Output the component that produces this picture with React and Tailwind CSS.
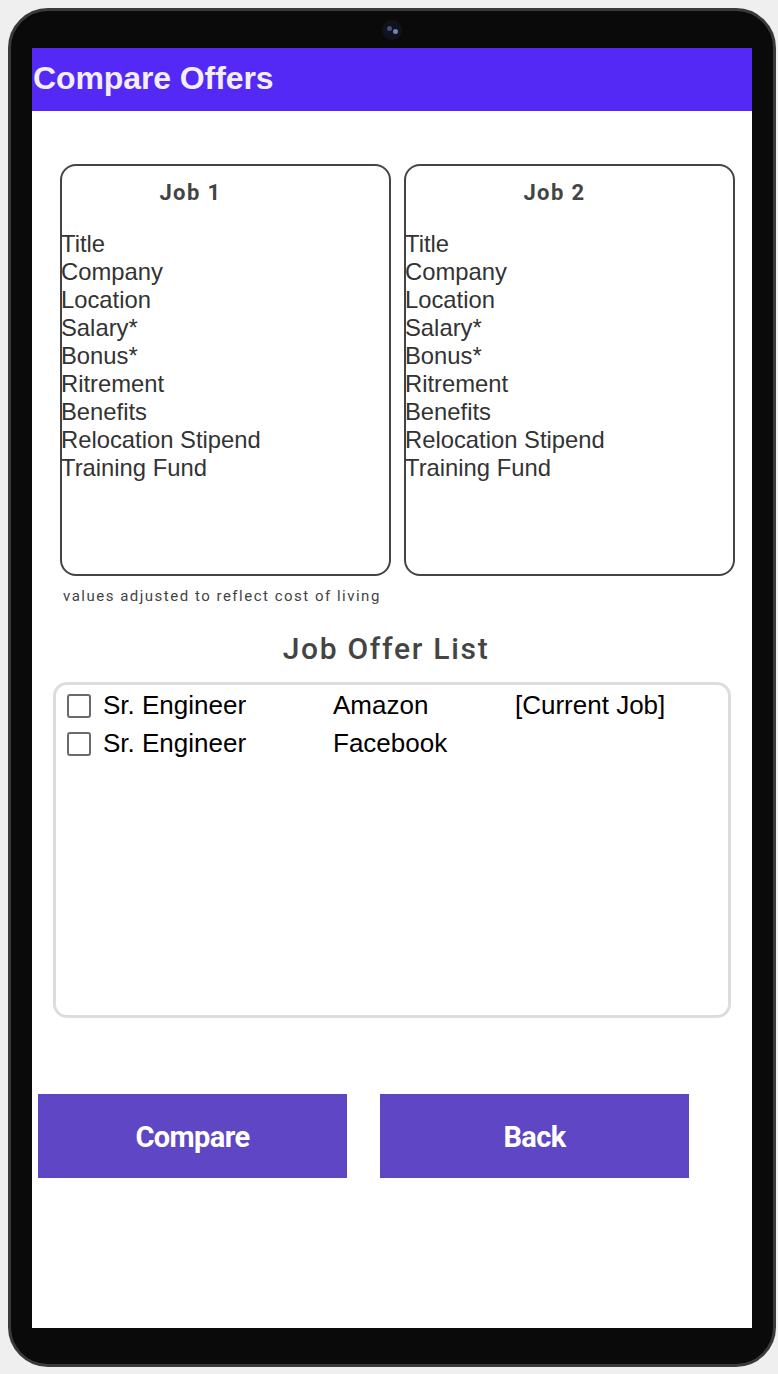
import React from 'react';

const fields = ['Title', 'Company', 'Location', 'Salary*', 'Bonus*', 'Ritrement', 'Benefits', 'Relocation Stipend', 'Training Fund'];

const offers = [
  { title: 'Sr. Engineer', company: 'Amazon', note: '[Current Job]' },
  { title: 'Sr. Engineer', company: 'Facebook', note: '' },
];

function JobCard({ name, titleClass }) {
  return (
    <div className="w-[331px] h-[412px] border-2 border-[#444] rounded-[16px]">
      <div className={`pt-[12px] text-center text-[22px] font-bold text-[#444] tracking-[1.4px] leading-[30px] font-['Roboto',sans-serif] ${titleClass}`}>
        {name}
      </div>
      <div className="mt-[22px] -ml-[1px] text-[23.8px] leading-[28px] text-[#333] font-['Liberation_Sans',sans-serif]">
        {fields.map((f) => (
          <div key={f}>{f}</div>
        ))}
      </div>
    </div>
  );
}

export default function App() {
  return (
    <div className="w-[778px] h-[1374px] bg-[#efefef] pt-[8px] pl-[8px]">
      <div className="w-[768px] h-[1359px] bg-[#0a0a0a] border-[3px] border-[#3a3a3a] rounded-[40px] flex flex-col items-center">
        {/* camera */}
        <div className="mt-[9px] w-[20px] h-[20px] rounded-full bg-[#10121c] flex items-center justify-center gap-[1px]">
          <div className="w-[5px] h-[5px] rounded-full bg-[#4a4a8a] -mt-[3px]" />
          <div className="w-[5px] h-[5px] rounded-full bg-[#6a88b0] mt-[3px]" />
        </div>
        {/* screen */}
        <div className="mt-[8px] w-[720px] h-[1280px] bg-white flex flex-col">
          <div className="h-[63px] bg-[#5428f5] flex items-center pl-[1px] pb-[3px]">
            <span className="text-[32px] font-bold text-[#f2eefa] font-['Liberation_Sans',sans-serif] tracking-[-0.1px]">
              Compare Offers
            </span>
          </div>

          <div className="mt-[53px] pl-[28px] flex gap-[13px]">
            <JobCard name="Job 1" titleClass="pr-[70px]" />
            <JobCard name="Job 2" titleClass="pr-[30px]" />
          </div>

          <div className="mt-[9px] pl-[31px] text-[15px] tracking-[1.5px] text-[#444] font-['Roboto',sans-serif]">
            values adjusted to reflect cost of living
          </div>

          <div className="mt-[18px] text-center pr-[12px] text-[30px] font-medium tracking-[1.7px] text-[#444] font-['Roboto',sans-serif]">
            Job Offer List
          </div>

          <div className="mt-[11px] ml-[21px] w-[678px] h-[336px] border-[3px] border-[#dddddd] rounded-[14px] pt-[2px] pl-[11px] font-['Liberation_Sans',sans-serif]">
            {offers.map((o, i) => (
              <div key={i} className="flex items-center h-[38px]">
                <div className="w-[24px] h-[24px] border-2 border-[#6a6a6a] rounded-[3px]" />
                <span className="ml-[12px] w-[230px] text-[26px] text-black">{o.title}</span>
                <span className="w-[182px] text-[26px] text-black">{o.company}</span>
                <span className="text-[26px] text-black">{o.note}</span>
              </div>
            ))}
          </div>

          <div className="mt-[76px] pl-[6px] flex gap-[33px]">
            <button className="w-[309px] h-[84px] bg-[#5f46c4] text-white text-[29px] font-bold font-['Roboto',sans-serif] tracking-[-0.6px] pt-[5px]">
              Compare
            </button>
            <button className="w-[309px] h-[84px] bg-[#5f46c4] text-white text-[29px] font-bold font-['Roboto',sans-serif] tracking-[-0.6px] pt-[5px]">
              Back
            </button>
          </div>
        </div>
      </div>
    </div>
  );
}
